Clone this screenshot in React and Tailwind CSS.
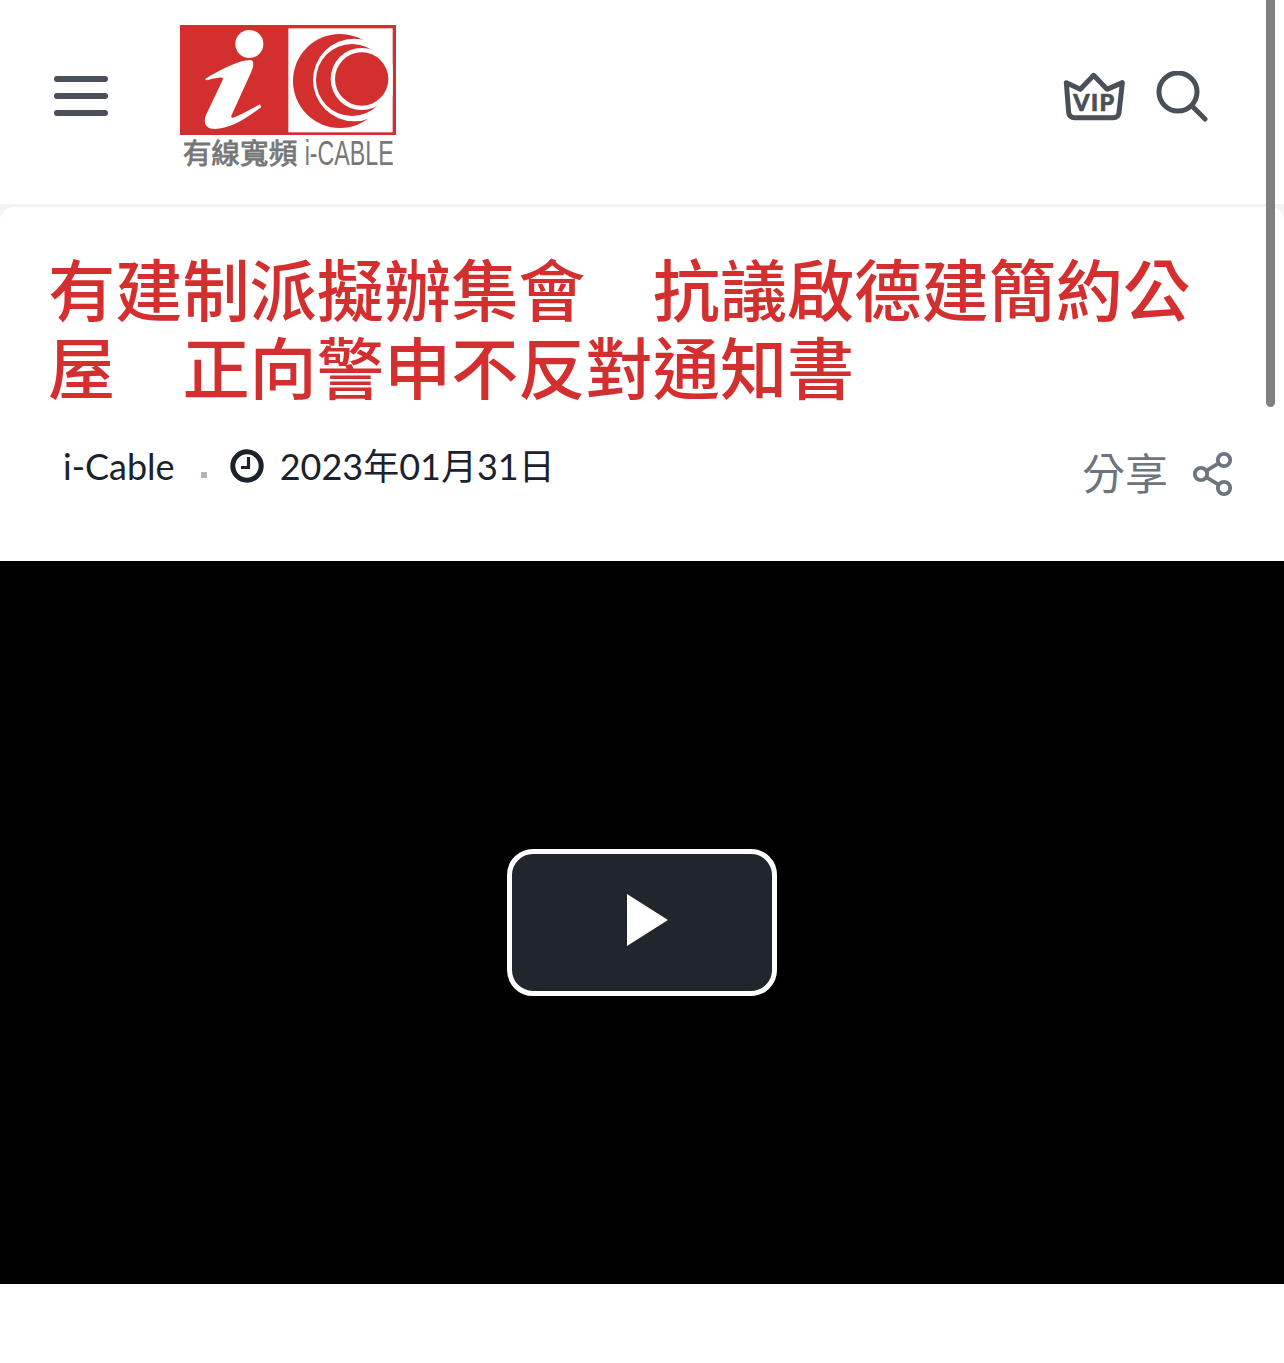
import React from 'react';

const Logo = () => (
  <svg width="216" height="150" viewBox="30 30 648 450" className="block">
    <defs>
      <clipPath id="panel">
        <rect x="355" y="40" width="313" height="312" />
      </clipPath>
    </defs>
    <rect x="30" y="30" width="648" height="330" fill="#d32f2f" />
    <rect x="355" y="40" width="313" height="312" fill="#fff" />
    <circle cx="238" cy="87" r="42" fill="#fff" />
    <path
      d="M105 192 C150 165 205 135 240 135 C252 135 252 150 245 168 L185 300 C178 318 200 305 270 268 L274 276 C225 315 175 342 135 342 C108 342 98 325 108 300 L158 195 C162 185 150 185 110 196 Z"
      fill="#fff"
    />
    <g clipPath="url(#panel)">
      <circle cx="510" cy="198" r="141" fill="#d32f2f" />
      <circle cx="553" cy="195" r="124" fill="#fff" />
      <circle cx="546" cy="195" r="108" fill="#d32f2f" />
      <circle cx="575" cy="192" r="93" fill="#fff" />
      <circle cx="575" cy="192" r="80" fill="#d32f2f" />
    </g>
    <text x="38" y="447" fontSize="86" fontWeight="400" fill="#777" stroke="#777" strokeWidth="2.5" fontFamily="'Noto Sans CJK TC', sans-serif">有線寬頻</text>
    <g transform="translate(404 449) scale(0.67 1)">
      <text x="0" y="0" fontSize="104" fontWeight="400" fill="#777" fontFamily="'Liberation Sans', sans-serif">i-CABLE</text>
    </g>
  </svg>
);

const Crown = () => (
  <svg width="66" height="50" viewBox="70 65 198 150" fill="none" className="block">
    <path
      d="M83 100 L125 120 L165 78 L205 120 L251 100 L241 190 Q239 205 223 205 L108 205 Q92 205 90 190 Z"
      stroke="#495057"
      strokeWidth="15"
      strokeLinejoin="round"
    />
    <text x="167" y="184" textAnchor="middle" fontSize="70" fontWeight="900" fill="#495057" stroke="#495057" strokeWidth="2" letterSpacing="4" fontFamily="Lato, sans-serif">VIP</text>
  </svg>
);

const Search = () => (
  <svg width="52" height="52" viewBox="0 0 52 52" fill="none" className="block">
    <circle cx="22" cy="21" r="19" stroke="#495057" strokeWidth="5" />
    <path d="M36 35 L49 48" stroke="#495057" strokeWidth="5" strokeLinecap="round" />
  </svg>
);

const Clock = () => (
  <svg width="34" height="34" viewBox="0 0 34 34" fill="none" className="block">
    <circle cx="17" cy="17" r="14.2" stroke="#1b222b" strokeWidth="5" />
    <path d="M18.5 8 V18.5 H11" stroke="#1b222b" strokeWidth="3.2" />
  </svg>
);

const Share = () => (
  <svg width="42" height="46" viewBox="0 0 42 46" fill="none" className="block">
    <circle cx="32" cy="9" r="6.2" stroke="#6c757d" strokeWidth="3.8" />
    <circle cx="9" cy="23" r="6.2" stroke="#6c757d" strokeWidth="3.8" />
    <circle cx="32" cy="37" r="6.2" stroke="#6c757d" strokeWidth="3.8" />
    <path d="M14.5 19.6 L26.5 12.4 M14.5 26.4 L26.5 33.6" stroke="#6c757d" strokeWidth="3.8" />
  </svg>
);

const App = () => {
  return (
    <div className="relative min-h-[1363px] bg-white font-[Lato,'Noto_Sans_CJK_TC',sans-serif]">
      <header className="flex h-[204px] items-start pl-[54px] pr-[76px]">
        <div className="mt-[76px] flex w-[54px] flex-col gap-[11px]">
          <span className="h-[6px] rounded-full bg-[#495057]"></span>
          <span className="h-[6px] rounded-full bg-[#495057]"></span>
          <span className="h-[6px] rounded-full bg-[#495057]"></span>
        </div>
        <div className="ml-[72px] mt-[25px]">
          <Logo />
        </div>
        <div className="ml-auto mt-[71px] flex items-start gap-[28px]">
          <Crown />
          <Search />
        </div>
      </header>

      <main className="bg-[#f3f3f3] pt-[3px]">
        <div className="rounded-t-[14px] bg-white">
          <h1 className="pl-[48px] pr-[60px] pt-[44px] text-[67.2px] font-medium leading-[78px] text-[#d32f2f]">
            有建制派擬辦集會　抗議啟德建簡約公屋　正向警申不反對通知書
          </h1>
          <div className="flex h-[154px] items-start pl-[63px] pr-[50px] pt-[35px]">
            <span className="text-[36px] leading-[48px] text-[#1b222b]">i-Cable</span>
            <span className="ml-[26px] mt-[30px] h-[6px] w-[6px] bg-[#adb5bd]"></span>
            <span className="ml-[23px] mt-[7px]">
              <Clock />
            </span>
            <span className="ml-[16px] text-[36px] leading-[48px] text-[#1b222b]">2023年01月31日</span>
            <div className="ml-auto mt-[4px] flex items-center gap-[24px]">
              <span className="text-[43px] leading-[56px] text-[#6c757d]">分享</span>
              <Share />
            </div>
          </div>
        </div>
      </main>

      <section className="flex h-[723px] items-center justify-center bg-black">
        <button className="flex h-[147px] w-[270px] items-center justify-center rounded-[26px] border-[5px] border-white bg-[#20262c]">
          <svg width="42" height="52" viewBox="0 0 42 52" className="mb-[6px] ml-[12px] block">
            <path d="M0 0 L41 26 L0 52 Z" fill="#fff" />
          </svg>
        </button>
      </section>

      {/* overlay scrollbar */}
      <div className="absolute right-[9px] top-0 h-[407px] w-[9px] rounded-b-full bg-[#808080]"></div>
    </div>
  );
};

export default App;
